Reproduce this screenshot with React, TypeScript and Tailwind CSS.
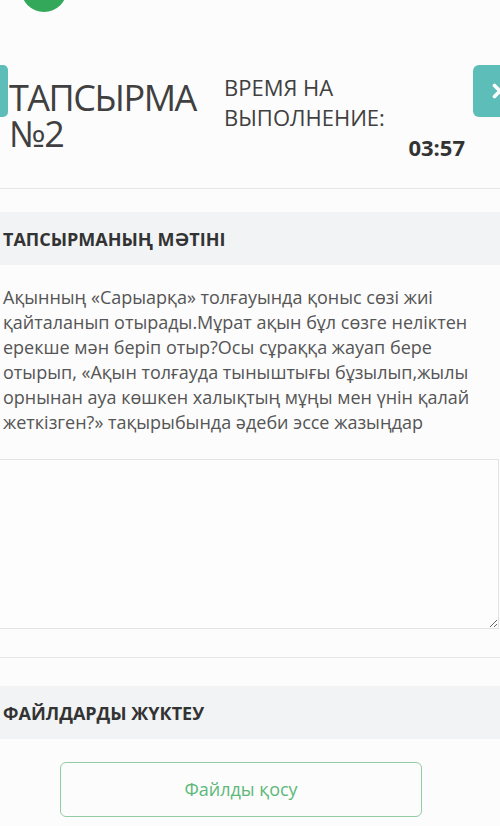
import React from 'react';

const taskLines = [
  'Ақынның «Сарыарқа» толғауында қоныс сөзі жиі',
  'қайталанып отырады.Мұрат ақын бұл сөзге неліктен',
  'ерекше мән беріп отыр?Осы сұраққа жауап бере',
  'отырып, «Ақын толғауда тыныштығы бұзылып,жылы',
  'орнынан ауа көшкен халықтың мұңы мен үнін қалай',
  'жеткізген?» тақырыбында әдеби эссе жазыңдар',
];

function SectionTitle({ children }: { children: React.ReactNode }) {
  return (
    <div className="flex h-[53px] items-center bg-[#f2f3f5] pl-[3px]">
      <h2 className="text-[18px] font-bold leading-none text-[#333]">{children}</h2>
    </div>
  );
}

export default function App() {
  return (
    <div className="min-h-screen w-[500px] overflow-hidden bg-[#fcfcfc] font-['Open_Sans',sans-serif]">
      {/* status badge, mostly scrolled off the top */}
      <div className="h-[12px] overflow-hidden">
        <div className="-mt-[34px] ml-[21px] h-[46px] w-[46px] rounded-full bg-[#34a85a]" />
      </div>

      {/* Task header */}
      <div className="mt-[53px] flex items-start">
        <button className="h-[52px] w-[8px] shrink-0 rounded-r-[5px] bg-[#5cbdb9]" />
        <h1 className="ml-[1px] mt-[15px] w-[215px] shrink-0 text-[36px] leading-[36px] tracking-[-1.5px] text-[#404040]">
          ТАПСЫРМА
          <br />
          №2
        </h1>
        <div className="mt-[7px] w-[241px] shrink-0 text-[#404040]">
          <p className="text-[22px] leading-[30px]">
            ВРЕМЯ НА
            <br />
            ВЫПОЛНЕНИЕ:
          </p>
          <p className="text-right text-[22px] font-bold leading-[30px] text-[#333]">03:57</p>
        </div>
        <button className="ml-[8px] flex h-[52px] w-[54px] shrink-0 items-center justify-center rounded-l-[6px] bg-[#5cbdb9]">
          <svg viewBox="0 0 24 24" className="h-[22px] w-[22px]" fill="none" stroke="white" strokeWidth={4} strokeLinecap="round">
            <path d="M6 6l12 12M18 6L6 18" />
          </svg>
        </button>
      </div>

      <div className="mt-[26px] border-t border-[#e6e6e6]" />

      {/* Task text */}
      <div className="mt-[23px]">
        <SectionTitle>ТАПСЫРМАНЫҢ МӘТІНІ</SectionTitle>
        <p className="pb-[24px] pl-[3px] pt-[20px] text-[18px] leading-[25px] text-[#555]">
          {taskLines.map((line, i) => (
            <React.Fragment key={i}>
              {line}
              {i < taskLines.length - 1 && <br />}
            </React.Fragment>
          ))}
        </p>
      </div>

      {/* Answer */}
      <textarea className="-ml-[10px] block h-[170px] w-[509px] resize-y border border-[#e3e3e3] bg-[#fdfdfd] outline-none" />
      <div className="mt-[28px] border-t border-[#e6e6e6]" />

      {/* Upload */}
      <div className="mt-[28px]">
        <SectionTitle>ФАЙЛДАРДЫ ЖҮКТЕУ</SectionTitle>
        <button className="ml-[60px] mt-[23px] flex h-[55px] w-[362px] items-center justify-center rounded-[6px] border-[1.5px] border-[#93cca2] text-[18px] text-[#5cb87a]">
          Файлды қосу
        </button>
      </div>
    </div>
  );
}
